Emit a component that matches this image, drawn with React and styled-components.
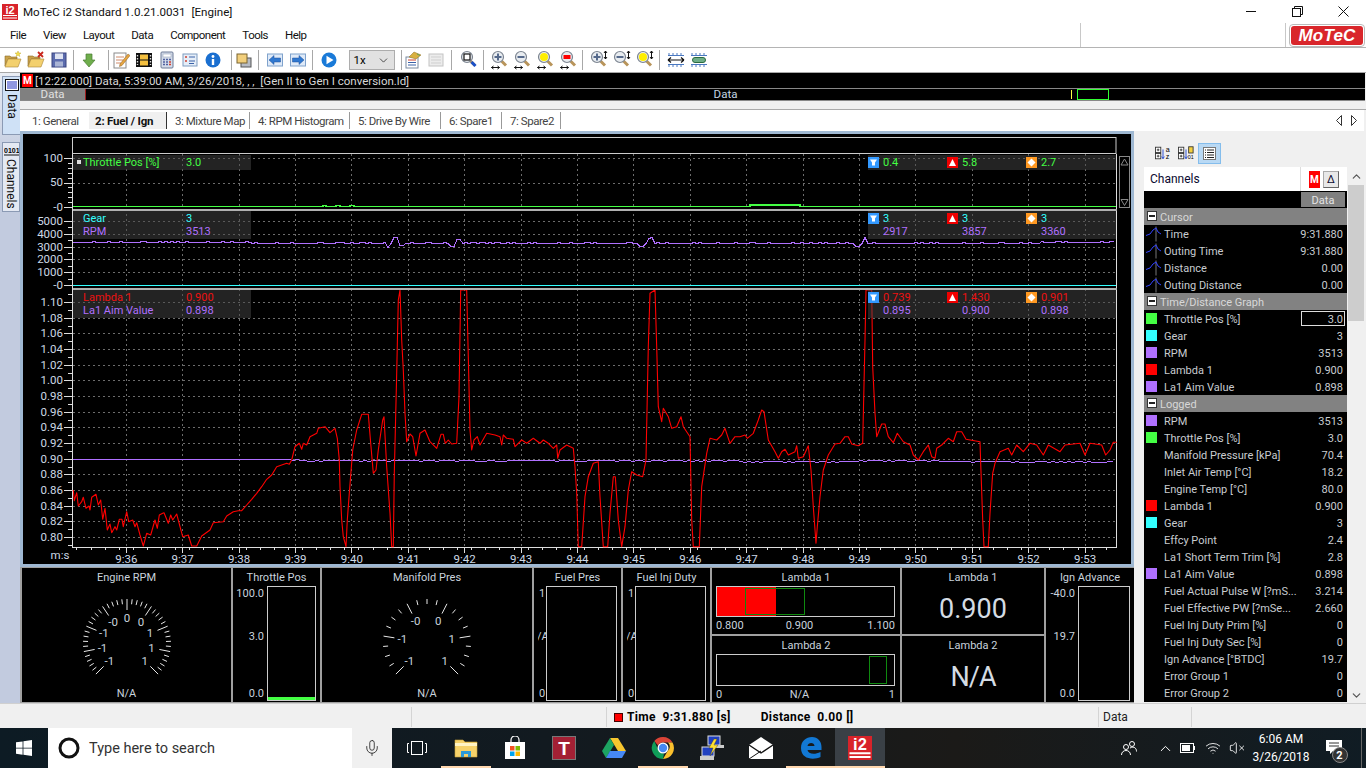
import React from 'react'
import styled, { createGlobalStyle } from 'styled-components'
import { Mic, ChevronUp, ChevronDown, VolumeX, Wifi } from 'lucide-react'

const GlobalStyle = createGlobalStyle`
  html, body { margin: 0; padding: 0; background: #f0f0f0; }
  * { box-sizing: border-box; }
  body { font-family: Roboto, "Liberation Sans", sans-serif; font-size: 12px; color: #000; overflow: hidden; }
`

/* ---------- data ---------- */

const MENUS = ['File', 'View', 'Layout', 'Data', 'Component', 'Tools', 'Help']
const TABS = [
  { label: '1: General', w: 65, noSep: true },
  { label: '2: Fuel / Ign', w: 78, active: true },
  { label: '3: Mixture Map', w: 83 },
  { label: '4: RPM Histogram', w: 100 },
  { label: '5: Drive By Wire', w: 91 },
  { label: '6: Spare1', w: 61 },
  { label: '7: Spare2', w: 59 },
]

const GREEN = '#44ff44'
const CYAN = '#33ffff'
const PURPLE = '#b070ff'
const RED = '#ff0000'

const CHANNELS = [
  { section: 'Cursor', rows: [
    { name: 'Time', value: '9:31.880', cursor: true },
    { name: 'Outing Time', value: '9:31.880', cursor: true },
    { name: 'Distance', value: '0.00', cursor: true },
    { name: 'Outing Distance', value: '0.00', cursor: true },
  ] },
  { section: 'Time/Distance Graph', rows: [
    { name: 'Throttle Pos [%]', value: '3.0', color: GREEN, boxed: true },
    { name: 'Gear', value: '3', color: CYAN },
    { name: 'RPM', value: '3513', color: PURPLE },
    { name: 'Lambda 1', value: '0.900', color: RED },
    { name: 'La1 Aim Value', value: '0.898', color: PURPLE },
  ] },
  { section: 'Logged', rows: [
    { name: 'RPM', value: '3513', color: PURPLE },
    { name: 'Throttle Pos [%]', value: '3.0', color: GREEN },
    { name: 'Manifold Pressure [kPa]', value: '70.4' },
    { name: 'Inlet Air Temp [°C]', value: '18.2' },
    { name: 'Engine Temp [°C]', value: '80.0' },
    { name: 'Lambda 1', value: '0.900', color: RED },
    { name: 'Gear', value: '3', color: CYAN },
    { name: 'Effcy Point', value: '2.4' },
    { name: 'La1 Short Term Trim [%]', value: '2.8' },
    { name: 'La1 Aim Value', value: '0.898', color: PURPLE },
    { name: 'Fuel Actual Pulse W [?mS...', value: '3.214' },
    { name: 'Fuel Effective PW [?mSe...', value: '2.660' },
    { name: 'Fuel Inj Duty Prim [%]', value: '0' },
    { name: 'Fuel Inj Duty Sec [%]', value: '0' },
    { name: 'Ign Advance [°BTDC]', value: '19.7' },
    { name: 'Error Group 1', value: '0' },
    { name: 'Error Group 2', value: '0' },
  ] },
]

const LEGENDS = [
  { top: 21, square: true, rows: [
    { color: GREEN, name: 'Throttle Pos [%]', value: '3.0', min: '0.4', max: '5.8', avg: '2.7' },
  ] },
  { top: 77, rows: [
    { color: CYAN, name: 'Gear', value: '3', min: '3', max: '3', avg: '3' },
    { color: PURPLE, name: 'RPM', value: '3513', min: '2917', max: '3857', avg: '3360' },
  ] },
  { top: 156, rows: [
    { color: '#ee1111', name: 'Lambda 1', value: '0.900', min: '0.739', max: '1.430', avg: '0.901' },
    { color: PURPLE, name: 'La1 Aim Value', value: '0.898', min: '0.895', max: '0.900', avg: '0.898' },
  ] },
]

// trace points read off the reference at 3x, x/y in crop pixels
const fromCrop = (pts, ox, oy) => pts.map(([x, y]) => `${(ox + x / 3).toFixed(1)},${(oy + y / 3).toFixed(1)}`).join(' ')

const LAMBDA_A = [[160,330],[163,362],[170,338],[175,378],[185,365],[190,352],[198,385],[207,378],[210,390],[215,352],[228,343],[235,375],[242,360],[248,418],[255,385],[262,450],[270,432],[275,458],[285,440],[290,450],[298,418],[306,418],[310,440],[320,395],[326,425],[338,420],[345,440],[350,428],[360,465],[370,498],[380,460],[392,465],[405,420],[412,445],[418,405],[428,400],[432,398],[445,430],[452,405],[458,420],[470,402],[480,440],[488,470],[505,465],[515,498],[530,498],[545,468],[570,450],[580,428],[610,425],[620,408],[640,395],[655,392],[665,392],[680,375],[695,358],[710,340],[725,320],[740,298],[755,285],[770,260],[800,250],[808,253],[815,240],[825,200],[838,190],[845,208],[850,190],[860,195],[870,170],[890,160],[895,145],[915,140],[930,158],[945,145],[952,175],[958,240]]
const LAMBDA_B = [[0,620],[5,720],[10,770],[18,800],[22,720],[28,640],[38,510],[50,450],[65,403],[85,403],[92,490],[100,580],[108,570],[115,510],[128,420],[132,410],[140,560],[150,700],[155,800],[160,800],[163,580],[170,280],[175,60],[180,30],[185,180],[190,270],[195,400],[200,485],[210,462],[218,470],[228,528],[240,460],[255,450],[270,485],[290,505],[303,463],[310,463],[316,490],[325,480],[335,492],[350,490],[357,350],[362,30],[380,30],[385,230],[390,450],[395,510],[402,480],[412,470],[420,495],[440,460],[465,465],[480,470],[485,495],[490,465],[500,475],[520,478],[525,500],[545,480],[560,490],[580,475],[600,490],[610,480],[625,490],[640,505],[650,495],[653,535],[660,510],[680,495],[700,505],[705,560],[710,640],[715,800],[725,800],[735,650],[745,590],[760,550],[775,545],[780,650],[790,800],[803,800],[810,700],[820,590],[826,590],[835,720],[845,800],[855,740],[865,630],[875,575],[890,585],[908,590],[918,540],[925,200],[930,40],[945,30],[950,200],[955,380],[965,425],[970,385],[985,410],[995,445],[1010,440],[1023,410],[1030,440],[1050,470],[1055,720],[1060,800],[1078,800],[1085,620],[1100,520],[1110,475],[1130,480],[1145,465],[1155,445],[1170,490],[1185,470],[1198,470]]
const LAMBDA_C = [[0,470],[15,465],[22,475],[40,460],[55,420],[65,390],[72,395],[85,480],[105,515],[115,535],[125,515],[135,508],[145,525],[165,515],[170,497],[175,535],[190,530],[205,497],[213,570],[220,680],[228,790],[232,740],[240,650],[250,570],[265,525],[285,492],[300,490],[315,470],[325,470],[335,492],[355,497],[368,490],[375,180],[378,30],[395,30],[398,260],[405,400],[410,470],[425,432],[435,432],[445,470],[460,488],[472,460],[490,485],[510,495],[520,525],[535,540],[550,515],[565,495],[575,530],[585,535],[590,505],[605,495],[625,475],[640,485],[650,455],[665,455],[678,478],[720,485],[722,550],[728,720],[732,800],[745,800],[750,700],[758,580],[765,550],[780,515],[805,505],[815,525],[830,495],[850,515],[870,490],[890,495],[910,525],[925,495],[960,515],[975,495],[1020,490],[1035,525],[1050,490],[1085,495],[1097,525],[1110,510],[1120,487],[1130,487]]
const LAMBDA = [fromCrop(LAMBDA_A, 20, 380), fromCrop(LAMBDA_B, 340, 280), fromCrop(LAMBDA_C, 740, 280)].join(' ')

const noise = x => {
  const n = Math.sin(x * 12.9898) * 43758.5453
  return n - Math.floor(n)
}

const RPM_BUMPS = [[388, 4], [395, -6], [401, 2], [452, 3], [459, -4], [642, 3], [650, -5], [858, 3], [865, -5]]
const buildRpm = () => {
  const pts = []
  for (let x = 73; x <= 1116; x += 3) {
    let y = 242.5 + (x < 250 ? -1 : 0) + (x > 1040 ? -1 : 0) + (noise(x) > 0.72 ? -1 : 0)
    RPM_BUMPS.forEach(([bx, d]) => { if (Math.abs(bx - x) <= 2) y += d })
    pts.push(`${x},${Math.round(y) + 0.5}`)
  }
  return pts.join(' ')
}

const buildAim = () => {
  const pts = []
  for (let x = 73; x <= 1116; x += 4) {
    const base = x < 300 ? 459 : x < 740 ? 460 : x < 860 ? 461 : x < 940 ? 460 : 461
    pts.push(`${x},${base + (x > 290 && noise(x + 9) > 0.75 ? 1 : 0) + 0.5}`)
  }
  return pts.join(' ')
}

const THROTTLE = '73,206.5 323,206.5 323,205.5 326,205.5 326,206.5 336,206.5 336,205.5 340,205.5 340,206.5 350,206.5 350,205.5 354,205.5 354,206.5 750,206.5 750,205 800,205 800,206.5 1116,206.5'
const SECONDS = ['9:36','9:37','9:38','9:39','9:40','9:41','9:42','9:43','9:44','9:45','9:46','9:47','9:48','9:49','9:50','9:51','9:52','9:53']
const secX = i => 126.3 + i * 56.4

/* ---------- window chrome ---------- */

const Screen = styled.div`
  width: 1366px;
  height: 768px;
  display: flex;
  flex-direction: column;
  background: #f0f0f0;
  overflow: hidden;
`

const TitleBar = styled.div`
  height: 23px;
  display: flex;
  align-items: center;
  background: #fff;
  padding-left: 2px;
`

const TitleText = styled.span`
  margin-left: 5px;
  font-size: 11.6px;
  white-space: pre;
  color: #111;
`

const WindowButtons = styled.div`
  margin-left: auto;
  display: flex;
`

const WindowButton = styled.div`
  width: 46px;
  height: 20px;
  display: flex;
  align-items: center;
  justify-content: center;
`

const MenuBar = styled.div`
  height: 25px;
  display: flex;
  align-items: center;
  background: #fff;
  border-bottom: 1px solid #b4b4b4;
  padding-left: 1.5px;
  position: relative;
`

const MenuItem = styled.span`
  padding: 0 8.5px;
  font-size: 11.5px;
  letter-spacing: -0.5px;
  color: #111;
`

const MenuSpacer = styled.div`
  margin-left: auto;
  width: 206px;
  height: 24px;
  border-left: 1px solid #c8c8c8;
  border-right: 1px solid #c8c8c8;
`

const LogoBox = styled.div`
  width: 76px;
  height: 23px;
  margin: 0 1px 0 3px;
  padding: 1px;
  border: 1px solid #bbb;
  border-radius: 4px;
  background: #fff;
`

const LogoInner = styled.div`
  height: 100%;
  border-radius: 3px;
  background: #d9262b;
  color: #fff;
  font: italic bold 17px/19px "Liberation Sans", sans-serif;
  text-align: center;
  letter-spacing: 0.2px;
`

const ToolBar = styled.div`
  height: 25px;
  display: flex;
  align-items: center;
  padding-left: 1.5px;
  background: #fff;
  border-bottom: 1px solid #a8a8a8;
`

const ToolButton = styled.div`
  width: 23px;
  height: 22px;
  flex: none;
  display: flex;
  align-items: center;
  justify-content: center;
`

const ToolSep = styled.div`
  width: 1px;
  height: 20px;
  flex: none;
  background: #a8a8a8;
  margin: 0 ${p => p.$r}px 0 ${p => p.$l}px;
`

const Combo = styled.div`
  width: 46px;
  height: 20px;
  margin-left: 8px;
  flex: none;
  display: flex;
  align-items: center;
  justify-content: space-between;
  padding: 0 4px;
  background: #e1e1e1;
  border: 1px solid #adadad;
  font-size: 11.5px;
`

/* ---------- rail ---------- */

const Workspace = styled.div`
  flex: 1;
  min-height: 0;
  display: flex;
`

const Rail = styled.div`
  width: 20px;
  flex: none;
  display: flex;
  flex-direction: column;
  align-items: flex-end;
  gap: 7px;
  padding-top: 3px;
  background: linear-gradient(#e9edf4, #c2cbdf 14%, #c2cbdf);
`

const RailTab = styled.div`
  width: 18px;
  height: ${p => p.$h}px;
  display: flex;
  flex-direction: column;
  align-items: center;
  padding-top: 2px;
  background: ${p => (p.$active ? '#cfe1f6' : '#e4e9f3')};
  border: 1px solid #8b9ab4;
  border-right: ${p => (p.$active ? 0 : '1px solid #8b9ab4')};
`

const RailLabel = styled.span`
  writing-mode: vertical-rl;
  margin-top: 3px;
  font-size: 12px;
  line-height: 14px;
  color: #111;
`

/* ---------- session strip + tabs ---------- */

const Main = styled.div`
  flex: 1;
  min-width: 0;
  display: flex;
  flex-direction: column;
`

const Strip = styled.div`
  width: 1345px;
  background: #000;
  border-bottom: 1px solid #888;
`

const SessionLine = styled.div`
  height: 16px;
  display: flex;
  align-items: center;
  gap: 2px;
  padding-left: 2px;
  border-bottom: 1px solid #888;
  color: #d8d8d8;
  font-size: 11.5px;
  white-space: pre;
`

const MBadge = styled.span`
  width: ${p => p.$w || 11}px;
  height: ${p => p.$h || 13}px;
  display: inline-flex;
  align-items: center;
  justify-content: center;
  background: #f00;
  color: #fff;
  font-size: 10px;
  font-weight: 700;
  flex: none;
`

const TimeLine = styled.div`
  height: 11px;
  position: relative;
  display: flex;
  color: #c4d4e4;
  font-size: 11.5px;
  line-height: 11px;
  text-align: center;
`

const TimeChip = styled.div`
  width: 66px;
  background: #808080;
  border-right: 1px solid #a02020;
  color: #e0e0e0;
`

const TimeFill = styled.div`
  flex: 1;
`

const CursorMark = styled.div`
  position: absolute;
  top: 1px;
  left: 1051px;
  width: 1px;
  height: 9px;
  background: #ffff44;
`

const CursorRange = styled.div`
  position: absolute;
  top: 0;
  left: 1057px;
  width: 32px;
  height: 11px;
  border: 1px solid #33ff33;
`

const Band = styled.div`
  height: 9px;
  background: #f0f0f0;
  border-bottom: 1px solid #aaa;
`

const TabRow = styled.div`
  width: 1344px;
  height: 21px;
  display: flex;
  align-items: stretch;
  padding-left: 4px;
  background: #fff;
`

const Tab = styled.div`
  width: ${p => p.$w}px;
  flex: none;
  display: flex;
  align-items: center;
  padding-left: ${p => (p.$active ? 6 : 8)}px;
  font-size: 11.5px;
  letter-spacing: ${p => (p.$active ? -0.2 : -0.45)}px;
  font-weight: ${p => (p.$active ? 700 : 400)};
  color: ${p => (p.$active ? '#111' : '#444')};
  background: ${p => (p.$active ? '#f0f0f0' : 'transparent')};
  margin: 2px 0;
  border-right: 1px solid ${p => (p.$noSep ? 'transparent' : p.$active ? '#333' : '#999')};
`

const TabArrows = styled.div`
  margin-left: auto;
  display: flex;
  align-items: center;
  gap: 9px;
  padding-right: 7px;
`

/* ---------- chart ---------- */

const Body = styled.div`
  flex: 1;
  min-height: 0;
  display: flex;
`

const Center = styled.div`
  width: 1114px;
  flex: none;
  display: flex;
  flex-direction: column;
`

const ChartFrame = styled.div`
  position: relative;
  height: 436px;
  border: 3px solid #9fb8d2;
  background: #000;
`

const ChartSvg = styled.svg`
  display: block;
  font-family: Roboto, "Liberation Sans", sans-serif;
  font-size: 11.5px;
`

const LegendBox = styled.div`
  position: absolute;
  top: ${p => p.$top}px;
  left: ${p => p.$left}px;
  width: ${p => p.$width}px;
  padding: 1px 0 1px ${p => p.$pad || 0}px;
  background: rgba(70, 70, 70, 0.5);
  font-size: 11px;
  line-height: 13px;
`

const LegendRow = styled.div`
  display: grid;
  grid-template-columns: ${p => p.$cols};
  color: ${p => p.$color};
  white-space: nowrap;
`

const StatCell = styled.div`
  display: flex;
  align-items: center;
  gap: 4px;
  padding-left: ${p => (p.$plain ? 15 : 0)}px;
`

const LegendSquare = styled.span`
  position: absolute;
  left: 4px;
  top: 5px;
  width: 4px;
  height: 4px;
  background: #ddd;
`

/* ---------- gauges ---------- */

const GaugeGrid = styled.div`
  height: 136px;
  display: grid;
  grid-template-columns: 209px 87px 210px 87px 87px 188px 142px 88px;
  grid-template-rows: 1fr 1fr;
  gap: 2px;
  padding: 1px 0 1px 2px;
  background: #a0a0a0;
  color: #c9d3dd;
  font-size: 11px;
`

const GaugePanel = styled.div`
  background: #000;
  min-width: 0;
  display: flex;
  flex-direction: column;
  grid-row: ${p => (p.$tall ? 'span 2' : 'auto')};
`

const GaugeTitle = styled.div`
  height: 18px;
  flex: none;
  text-align: center;
  line-height: 20px;
`

const DialSvg = styled.svg`
  display: block;
  margin: 7px auto 0;
  font-family: Roboto, "Liberation Sans", sans-serif;
  font-size: 11.5px;
`

const DialValue = styled.div`
  margin-top: 4px;
  text-align: center;
  line-height: 14px;
`

const VBarBody = styled.div`
  flex: 1;
  display: flex;
  padding: 0 4px 5px 0;
`

const VScale = styled.div`
  width: ${p => p.$w}px;
  margin-left: ${p => p.$ml}px;
  flex: none;
  display: grid;
  grid-template-rows: 43px 57px auto;
  grid-template-columns: minmax(0, 1fr);
  overflow: hidden;
  line-height: 14px;
  padding: 1px ${p => p.$pr}px 0 0;
`

const VScaleText = styled.div`
  display: flex;
  min-width: 0;
  justify-content: ${p => p.$align};
  white-space: nowrap;
  transform: translateX(${p => p.$shift}px);
`

const VBarBox = styled.div`
  flex: 1;
  display: flex;
  flex-direction: column;
  justify-content: flex-end;
  border: 1px solid #ccc;
`

const VBarFill = styled.div`
  background: ${GREEN};
`

const HBarWrap = styled.div`
  padding: 0 5px 0 4px;
`

const HBarBox = styled.div`
  position: relative;
  height: ${p => p.$h}px;
  border: 1px solid #ccc;
`

const HBarFill = styled.div`
  height: 100%;
  background: #f00;
`

const HBarTarget = styled.div`
  position: absolute;
  top: 1px;
  bottom: 1px;
  border: 1px solid #0f8a0f;
`

const HScale = styled.div`
  display: grid;
  grid-template-columns: 1fr 1fr 1fr;
  margin-top: 2px;
  line-height: 14px;
  span:nth-child(2) { text-align: center; transform: translateX(-6px); }
  span:nth-child(3) { text-align: right; }
`

const BigValue = styled.div`
  flex: 1;
  display: flex;
  align-items: center;
  justify-content: center;
  padding-bottom: 2px;
  font-size: 27px;
  letter-spacing: ${p => (p.$tight ? -1 : 0)}px;
  color: #d4dce4;
`

/* ---------- channel panel ---------- */

const Side = styled.div`
  flex: 1;
  min-width: 0;
  display: flex;
  flex-direction: column;
  padding: 11px 2px 1px 10px;
`

const SideTools = styled.div`
  height: 22px;
  margin-bottom: 3px;
  display: flex;
  align-items: center;
  gap: 5px;
  padding-left: 10px;
`

const SideToolBtn = styled.div`
  width: ${p => (p.$active ? 23 : 18)}px;
  height: 21px;
  margin-left: ${p => (p.$active ? -2 : 0)}px;
  display: flex;
  align-items: center;
  justify-content: center;
  background: ${p => (p.$active ? '#b9d9f4' : 'transparent')};
  border: 1px solid ${p => (p.$active ? '#84bdec' : 'transparent')};
`

const SideMain = styled.div`
  flex: 1;
  min-height: 0;
  display: flex;
  gap: 1px;
`

const ChannelColumn = styled.div`
  width: 203px;
  flex: none;
  display: flex;
  flex-direction: column;
`

const ChannelHead = styled.div`
  height: 24px;
  flex: none;
  display: flex;
  align-items: center;
  padding-left: 6px;
  background: #fff;
  color: #0a0a30;
  font-size: 12px;
`

const HeadBtns = styled.div`
  margin-left: auto;
  height: 100%;
  width: 47px;
  display: flex;
  align-items: center;
  gap: 3px;
  padding-left: 8px;
  border-left: 1px solid #ddd;
`

const DeltaBtn = styled.span`
  width: 16px;
  height: 17px;
  display: flex;
  align-items: center;
  justify-content: center;
  background: #e8e8e8;
  border: 1px solid #aaa;
  border-right-color: #666;
  border-bottom-color: #666;
  font-size: 11px;
`

const ChannelTable = styled.div`
  flex: 1;
  background: #000;
  color: #c8ccd0;
  font-size: 11px;
`

const ColHead = styled.div`
  height: 17px;
  display: flex;
  justify-content: flex-end;
  padding: 1px 2px 1px 0;
`

const ColName = styled.div`
  width: 44px;
  text-align: center;
  line-height: 17px;
  background: #808080;
  color: #e4e4e4;
`

const SectionHead = styled.div`
  height: 17px;
  display: flex;
  align-items: center;
  gap: 3px;
  padding: 1px 0 0 3px;
  background: #828282;
  color: #d8d8d8;
`

const MinusBox = styled.span`
  width: 10px;
  height: 10px;
  margin: -1px 0 1px;
  background: #fff;
  border: 1px solid #333;
  display: flex;
  align-items: center;
  justify-content: center;
  &::after { content: ''; width: 6px; height: 2px; background: #222; }
`

const ChannelRow = styled.div`
  height: 17px;
  display: flex;
  align-items: center;
  padding: 1px 4px 0 2px;
  white-space: nowrap;
  position: relative;
`

const Swatch = styled.span`
  width: 11px;
  height: 11px;
  margin: -1px 7px 0 0;
  flex: none;
  background: ${p => p.$color || 'transparent'};
`

const ChannelValue = styled.span`
  margin-left: auto;
`

const ValueBox = styled.span`
  position: absolute;
  right: 2px;
  top: 1px;
  width: 44px;
  height: 15px;
  border: 1px solid #ddd;
`

const ScrollTrack = styled.div`
  flex: 1;
  display: flex;
  flex-direction: column;
  align-items: center;
  padding-top: 3px;
`

const ScrollThumb = styled.div`
  width: 100%;
  height: 136px;
  background: #cdcdcd;
  margin: 2px 0 auto;
`

/* ---------- status + taskbar ---------- */

const StatusBar = styled.div`
  height: 25px;
  flex: none;
  display: flex;
  align-items: stretch;
  padding: 3px 0 1px;
  background: #f0f0f0;
  border-top: 1px solid #d0d0d0;
  font-size: 12px;
`

const StatusCell = styled.div`
  width: ${p => p.$w}px;
  flex: ${p => (p.$w ? 'none' : 1)};
  display: flex;
  align-items: center;
  padding-left: ${p => p.$pad || 0}px;
  border-right: ${p => (p.$last ? 0 : '1px solid #d4d4d4')};
  white-space: pre;
  color: #222;
`

const StatusRed = styled.span`
  width: 9px;
  height: 9px;
  margin-right: 4px;
  background: #f00;
  border: 1px solid #400;
`

const StatusBold = styled.b`
  color: #000;
  letter-spacing: 0.35px;
  margin-left: ${p => p.$ml || 0}px;
`

const Taskbar = styled.div`
  height: 40px;
  flex: none;
  display: flex;
  align-items: stretch;
  background: linear-gradient(90deg, #0d1b24, #121a20 40%, #1b1a18 70%, #101c24);
  color: #fff;
`

const StartButton = styled.div`
  width: 48px;
  display: flex;
  align-items: center;
  justify-content: center;
`

const SearchBox = styled.div`
  width: 304px;
  display: flex;
  align-items: center;
  padding-left: 10px;
  background: #fff;
  color: #333;
  font-size: 14.5px;
`

const SearchText = styled.span`
  margin-left: 9px;
`

const MicCell = styled.div`
  width: 40px;
  display: flex;
  align-items: center;
  justify-content: center;
  background: #f0f0f0;
  color: #222;
`

const TaskItem = styled.div`
  width: 49.25px;
  display: flex;
  align-items: center;
  justify-content: center;
  background: ${p => (p.$active ? '#3a4046' : 'transparent')};
  border-bottom: 2px solid ${p => (p.$run ? '#ffd7ae' : 'transparent')};
  border-top: 2px solid transparent;
`

const Tray = styled.div`
  margin-left: auto;
  display: flex;
  align-items: center;
`

const TrayItem = styled.div`
  width: ${p => p.$w}px;
  margin-left: ${p => p.$ml || 0}px;
  display: flex;
  justify-content: center;
`

const Clock = styled.div`
  width: 66px;
  margin-right: 1.5px;
  text-align: center;
  font-size: 12px;
  line-height: 18px;
`

const NotifyWrap = styled.div`
  position: relative;
  width: 36px;
  height: 26px;
  display: flex;
  align-items: center;
  justify-content: center;
`

const NotifyBadge = styled.span`
  position: absolute;
  left: 16px;
  top: 12px;
  width: 16px;
  height: 16px;
  border-radius: 50%;
  background: #333;
  border: 1px solid #888;
  display: flex;
  align-items: center;
  justify-content: center;
  font-size: 11px;
  font-weight: 700;
`

const ShowDesktop = styled.div`
  width: 1px;
  height: 100%;
  margin: 0 4px 0 9.5px;
  background: #666;
`

/* ---------- icons ---------- */

const Ico = ({ w = 18, h = 18, children }) => (
  <svg width={w} height={h} viewBox={`0 0 ${w} ${h}`}>{children}</svg>
)

const FolderBase = () => (
  <>
    <path d="M1 5h5l1 1h6v2H4l-3 7z" fill="#c9a24a" stroke="#8a6d2a" strokeWidth=".6" />
    <path d="M4 8h13l-3 8H1z" fill="#f3d06e" stroke="#a98536" strokeWidth=".6" />
  </>
)

const I = {
  open: () => <Ico><FolderBase /><path d="M14 0l.8 2h2.2l-1.8 1.4.7 2.1-1.9-1.2-1.9 1.2.7-2.1L11 2h2.200z" fill="#f7e24c" stroke="#b8a020" strokeWidth=".4" /></Ico>,
  del: () => <Ico><FolderBase /><path d="M11 1l5 5M16 1l-5 5" stroke="#c8281e" strokeWidth="1.8" /></Ico>,
  save: () => (
    <Ico>
      <rect x="2" y="2" width="14" height="14" fill="#5c6cae" stroke="#3a4580" />
      <rect x="5" y="2.500" width="8" height="5.500" fill="#dfe4f2" />
      <rect x="5" y="10.500" width="8" height="5" fill="#aab4d4" />
    </Ico>
  ),
  down: () => <Ico><path d="M6 3h6v6h3l-6 7-6-7h3z" fill="#6fae4c" stroke="#4a7c34" strokeWidth=".7" /></Ico>,
  edit: () => (
    <Ico>
      <rect x="2" y="2" width="12" height="15" fill="#fff" stroke="#8a8a8a" />
      <path d="M4 6h8M4 9h7M4 12h5" stroke="#d08a6a" />
      <path d="M8 13l8-10 2 1.500-8 10-2.500 1z" fill="#e6a640" stroke="#8a5a20" strokeWidth=".5" />
    </Ico>
  ),
  film: () => (
    <Ico>
      <rect x="1" y="2" width="16" height="14" fill="#111" />
      <rect x="5" y="3.500" width="8" height="5" fill="#f4c040" />
      <rect x="5" y="9.500" width="8" height="5" fill="#f4c040" />
      <path d="M2.500 4v10M15.500 4v10" stroke="#ddd" strokeWidth="1.400" strokeDasharray="1.500 1.500" />
    </Ico>
  ),
  calc: () => (
    <Ico>
      <rect x="3" y="1" width="12" height="16" rx="1" fill="#d4dcea" stroke="#6c7a96" />
      <rect x="5" y="3" width="8" height="3" fill="#fff" stroke="#8a98b0" strokeWidth=".5" />
      <path d="M5 8.500h2M8 8.500h2M11 8.500h2M5 11h2M8 11h2M5 13.500h2M8 13.500h2" stroke="#5060a0" strokeWidth="1.400" />
      <path d="M11 11h2M11 13.500h2" stroke="#d04030" strokeWidth="1.400" />
    </Ico>
  ),
  check: () => (
    <Ico>
      <rect x="2" y="3" width="14" height="12" fill="#e6eef8" stroke="#7f9cc0" />
      <path d="M4 6h2M4 10h2" stroke="#d04030" strokeWidth="1.500" />
      <path d="M8 6h6M8 10h6M8 12.500h5" stroke="#3a62a8" />
    </Ico>
  ),
  info: () => (
    <Ico w={16} h={16}>
      <circle cx="8" cy="8" r="7.500" fill="#1a6fd0" />
      <circle cx="8" cy="4.500" r="1.400" fill="#fff" />
      <rect x="6.800" y="7" width="2.400" height="6" fill="#fff" />
    </Ico>
  ),
  layers: () => (
    <Ico>
      <rect x="6" y="7" width="10" height="9" fill="#b8bcc4" stroke="#555" />
      <rect x="2" y="3" width="10" height="9" fill="#f2cf7c" stroke="#7a6430" />
    </Ico>
  ),
  left: () => (
    <Ico>
      <rect x="1.500" y="3" width="15" height="12" fill="#dfeaf8" stroke="#7fa2cc" />
      <path d="M3 9l5-4.500V7h6.500v4H8v2.500z" fill="#2f78d0" stroke="#1c4f98" strokeWidth=".5" />
    </Ico>
  ),
  right: () => (
    <Ico>
      <rect x="1.500" y="3" width="15" height="12" fill="#dfeaf8" stroke="#7fa2cc" />
      <path d="M15 9l-5-4.500V7H3.500v4H10v2.500z" fill="#2f78d0" stroke="#1c4f98" strokeWidth=".5" />
    </Ico>
  ),
  play: () => (
    <Ico w={16} h={16}>
      <circle cx="8" cy="8" r="7.500" fill="#1a7ad8" />
      <path d="M5.500 3.800l7 4.200-7 4.200z" fill="#fff" />
    </Ico>
  ),
  props: () => (
    <Ico>
      <rect x="2" y="6" width="12" height="11" fill="#fff" stroke="#7a8aa0" />
      <path d="M4 9h8" stroke="#d04030" /><path d="M4 11.500h8M4 14h8" stroke="#3a62a8" />
      <path d="M5 6l5-5 7 3-5 4z" fill="#d8b040" stroke="#8a6c20" strokeWidth=".5" />
      <path d="M13 3l3 1.500" stroke="#5aa05a" />
    </Ico>
  ),
  disabled: () => (
    <Ico>
      <rect x="2" y="3" width="14" height="12" fill="#ececec" stroke="#c4c4c4" />
      <path d="M4 6h10M4 9h10M4 12h10" stroke="#cfcfcf" />
    </Ico>
  ),
}

const Lens = ({ inner, arrows }) => (
  <svg width="21" height="20" viewBox="-2.5 0 21 20">
    <path d="M11 11l4.500 4.500" stroke="#b8945a" strokeWidth="3" />
    <circle cx="7.500" cy="7" r="5.500" fill="#e8ecf0" stroke="#7c8490" strokeWidth="1.200" />
    {inner === 'plus' && <path d="M4 7h7M7.500 3.500v7" stroke="#566a8c" strokeWidth="2" />}
    {inner === 'minus' && <path d="M4 7h7" stroke="#566a8c" strokeWidth="2" />}
    {inner === 'yellow' && <circle cx="7.500" cy="7" r="4" fill="#ffee00" />}
    {inner === 'red' && <rect x="4" y="5" width="7" height="4" fill="#f00" />}
    {inner === 'box' && <rect x="4.500" y="4" width="6" height="6" fill="#fff" stroke="#111" strokeWidth="1.200" />}
    {inner === 'box' && <path d="M12 12l4 4" stroke="#1a50c8" strokeWidth="3" />}
    {arrows === 'h' && <path d="M1 17.500h8M1 17.500l2-1.500M1 17.500l2 1.500M9 17.500l-2-1.500M9 17.500l-2 1.500" stroke="#111" fill="none" />}
    {arrows === 'v' && <path d="M16 1v8M16 1l-1.500 2M16 1l1.500 2M16 9l-1.500-2M16 9l1.500-2" stroke="#111" fill="none" />}
  </svg>
)

const Ruler = ({ link }) => (
  <svg width="18" height="16" viewBox="0 0 18 16">
    <path d="M1 3.500h16M1 12.500h16" stroke="#4a78c0" />
    <path d="M2 1v2M6 1v2M10 1v2M14 1v2M2 13v2M6 13v2M10 13v2M14 13v2" stroke="#4a78c0" />
    {link
      ? <rect x="2.500" y="5.500" width="13" height="5" rx="2.500" fill="#6fae88" stroke="#2a6a40" />
      : <path d="M1 8h16M1 8l3-2.500M1 8l3 2.500M17 8l-3-2.500M17 8l-3 2.500" stroke="#111" fill="none" strokeWidth="1.200" />}
  </svg>
)

const I2Logo = ({ size = 16 }) => (
  <svg width={size} height={size} viewBox="0 0 16 16">
    <rect width="16" height="16" fill="#d8232a" />
    <text x="8" y="9.500" textAnchor="middle" fontSize="11" fontWeight="700" fontFamily="Liberation Sans, sans-serif" fill="#fff">i2</text>
    <path d="M1 11.500h14M1 14h14" stroke="#fff" strokeWidth="1.200" />
  </svg>
)

const Marker = ({ kind }) => {
  const bg = { min: '#3399ff', max: '#f00000', avg: '#ff9922' }[kind]
  return (
    <svg width="11" height="11" viewBox="0 0 11 11" style={{ flex: 'none' }}>
      <rect width="11" height="11" fill={bg} />
      {kind === 'min' && <path d="M2 2.500h7l-2 3v3H4v-3z" fill="#fff" />}
      {kind === 'max' && <path d="M5.500 2l3.500 7H2z" fill="#fff" />}
      {kind === 'avg' && <path d="M5.500 1.500l4 4-4 4-4-4z" fill="#fff" />}
    </svg>
  )
}

const SortIcon = ({ digits }) => (
  <svg width="18" height="16" viewBox="0 0 18 16" fontFamily="Liberation Sans, sans-serif">
    <rect x=".5" y="1.500" width="6" height="6" fill="#fff" stroke="#333" />
    <path d="M2 4.500h3M3.500 3v3" stroke="#333" />
    <rect x=".5" y="8.500" width="6" height="6" fill="#fff" stroke="#333" />
    <path d="M2 11.500h3M3.500 10v3" stroke="#333" />
    <path d="M9 4v10M7.500 12l1.500 2.500 1.500-2.500" stroke="#1a40d0" fill="none" />
    {digits
      ? <><rect x="12" y="1" width="5" height="7" fill="#f4d040" stroke="#333" /><text x="11" y="15" fontSize="6">01</text></>
      : <><text x="12" y="7" fontSize="8">a</text><text x="12" y="15" fontSize="8">z</text></>}
  </svg>
)

const CursorGlyph = () => (
  <svg width="15" height="16" viewBox="0 0 15 16" style={{ margin: '-1px 3px 0 0', flex: 'none' }}>
    <path d="M10 .5v15" stroke="#777" />
    <path d="M0 9.500l4-1.500 3-4 3-2 2 4 3 2" stroke="#3344ff" fill="none" />
  </svg>
)

/* ---------- pieces ---------- */

const Chart = () => {
  const g1 = [158, 182.5]
  const g2 = [221, 234, 246.5, 259, 272]
  const lambdaLabels = ['1.10','1.08','1.06','1.04','1.02','1.00','0.98','0.96','0.94','0.92','0.90','0.88','0.86','0.84','0.82','0.80']
  const g3 = lambdaLabels.map((_, i) => 302 + i * 15.67)
  const gridY = [...g1, ...g2, ...g3].map(y => Math.round(y) + 0.5)
  const minorY = []
  for (let y = 158; y <= 207; y += 4.9) minorY.push(y)
  for (let y = 221; y <= 285; y += 6.4) minorY.push(y)
  for (let y = 294.2; y <= 546; y += 7.835) minorY.push(y)
  const minorX = []
  for (let x = 76.9; x < 1116; x += 14.1) minorX.push(x)
  return (
    <ChartSvg width="1108" height="430" viewBox="23 134 1108 430">
      <rect x="72.500" y="137.500" width="1043.500" height="16" fill="none" stroke="#ccc" />
      <g shapeRendering="crispEdges" stroke="#6c6c6c" strokeDasharray="2 3">
        {gridY.map(y => <line key={y} x1="73" x2="1116" y1={y} y2={y} />)}
        {SECONDS.map((_, i) => <line key={i} x1={secX(i)} x2={secX(i)} y1="154" y2="547" />)}
      </g>
      <g shapeRendering="crispEdges" stroke="#ddd">
        <line x1="72.500" x2="72.500" y1="154" y2="548" />
        <line x1="1116.500" x2="1116.500" y1="154" y2="548" />
        <line x1="72" x2="1117" y1="547.500" y2="547.500" />
        {[158, 182.5, 207, 221, 234, 246.5, 259, 272, 285, ...g3].map(y => <line key={y} x1="64" x2="72" y1={Math.round(y) + 0.5} y2={Math.round(y) + 0.5} />)}
        {minorY.map(y => <line key={y} x1="68" x2="72" y1={Math.round(y) + 0.5} y2={Math.round(y) + 0.5} />)}
        {minorX.map(x => <line key={x} y1="548" y2="550" x1={x} x2={x} />)}
        {SECONDS.map((_, i) => <line key={i} y1="548" y2="553" x1={secX(i)} x2={secX(i)} />)}
      </g>
      <g fill="#cdd8e4" textAnchor="end">
        <text x="63" y="162">100</text><text x="63" y="186">50</text><text x="63" y="211">-0</text>
        {['5000','4000','3000','2000','1000','-0'].map((t, i) => <text key={i} x="63" y={225 + i * 12.8}>{t}</text>)}
        {lambdaLabels.map((t, i) => <text key={t} x="63" y={g3[i] + 4}>{t}</text>)}
      </g>
      <g fill="#cdd8e4" textAnchor="middle">
        <text x="60" y="559">m:s</text>
        {SECONDS.map((t, i) => <text key={t} x={secX(i)} y="562.500">{t}</text>)}
      </g>
      <polyline points={THROTTLE} fill="none" stroke={GREEN} strokeWidth="1.200" shapeRendering="crispEdges" />
      <polyline points={buildRpm()} fill="none" stroke={PURPLE} strokeWidth="1" shapeRendering="crispEdges" />
      <line x1="73" x2="1116" y1="285.500" y2="285.500" stroke={CYAN} shapeRendering="crispEdges" />
      <polyline points={buildAim()} fill="none" stroke={PURPLE} strokeWidth="1" shapeRendering="crispEdges" />
      <polyline points={LAMBDA} fill="none" stroke={RED} strokeWidth="1.100" strokeLinejoin="round" />
      <g shapeRendering="crispEdges" fill="#b0b0b0">
        <rect x="73" y="209" width="1044" height="2" />
        <rect x="73" y="288" width="1044" height="2" />
      </g>
      <g fill="none" stroke="#888">
        <rect x="1119.500" y="156.500" width="10" height="51" />
        <path d="M1124.500 159l-3.500 6h7zM1124.500 205.500l-3.500-6h7z" />
      </g>
    </ChartSvg>
  )
}

const Legends = () => LEGENDS.map(l => (
  <React.Fragment key={l.top}>
    <LegendBox $top={l.top} $left={50} $width={178} $pad={10}>
      {l.square && <LegendSquare />}
      {l.rows.map(r => (
        <LegendRow key={r.name} $color={r.color} $cols="103px 1fr">
          <span>{r.name}</span><span>{r.value}</span>
        </LegendRow>
      ))}
    </LegendBox>
    <LegendBox $top={l.top} $left={845} $width={248}>
      {l.rows.map((r, i) => (
        <LegendRow key={r.name} $color={r.color} $cols="79px 79px 1fr">
          {['min', 'max', 'avg'].map(k => (
            <StatCell key={k} $plain={i > 0}>
              {i === 0 && <Marker kind={k} />}
              <span>{r[k]}</span>
            </StatCell>
          ))}
        </LegendRow>
      ))}
    </LegendBox>
  </React.Fragment>
))

const Dial = ({ labels, sub }) => {
  const cx = 60
  const cy = 50
  const steps = (labels.length - 1) * sub
  const pt = (a, r) => [cx + r * Math.sin((a * Math.PI) / 180), cy - r * Math.cos((a * Math.PI) / 180)]
  const ticks = []
  for (let i = 0; i <= steps; i++) {
    const a = -135 + (270 * i) / steps
    const [x1, y1] = pt(a, i % sub === 0 ? 33 : 39)
    const [x2, y2] = pt(a, 44)
    ticks.push(<line key={i} x1={x1} y1={y1} x2={x2} y2={y2} stroke="#e8e8e8" />)
  }
  return (
    <DialSvg width="120" height="90" viewBox="0 0 120 90">
      {ticks}
      {labels.map((t, i) => {
        const [x, y] = pt(-135 + (270 * i) / (labels.length - 1), 25)
        return <text key={i} x={x} y={y + 4} textAnchor="middle" fill="#c9d3dd">{t}</text>
      })}
    </DialSvg>
  )
}

const DialPanel = ({ title, labels, sub }) => (
  <GaugePanel $tall>
    <GaugeTitle>{title}</GaugeTitle>
    <Dial labels={labels} sub={sub} />
    <DialValue>N/A</DialValue>
  </GaugePanel>
)

const VBarPanel = ({ title, labels, fill = 0, scaleW, ml = 0, pr = 3, align = 'flex-end' }) => (
  <GaugePanel $tall>
    <GaugeTitle>{title}</GaugeTitle>
    <VBarBody>
      <VScale $w={scaleW} $ml={ml} $pr={pr}>
        {labels.map((t, i) => <VScaleText key={i} $align={align} $shift={t === 'N/A' ? -3 : 0}>{t}</VScaleText>)}
      </VScale>
      <VBarBox>{fill > 0 && <VBarFill style={{ height: fill }} />}</VBarBox>
    </VBarBody>
  </GaugePanel>
)

const HBarPanel = ({ title, height, value, target, labels }) => (
  <GaugePanel>
    <GaugeTitle>{title}</GaugeTitle>
    <HBarWrap>
      <HBarBox $h={height}>
        {value > 0 && <HBarFill style={{ width: `${value * 100}%` }} />}
        <HBarTarget style={{ left: target[0], width: target[1] }} />
      </HBarBox>
      <HScale>{labels.map(t => <span key={t}>{t}</span>)}</HScale>
    </HBarWrap>
  </GaugePanel>
)

const DigitalPanel = ({ title, value }) => (
  <GaugePanel>
    <GaugeTitle>{title}</GaugeTitle>
    <BigValue $tight={value === 'N/A'}>{value}</BigValue>
  </GaugePanel>
)

const Channels = () => (
  <ChannelColumn>
    <ChannelHead>
      Channels
      <HeadBtns>
        <MBadge $w={11} $h={17}>M</MBadge>
        <DeltaBtn>Δ</DeltaBtn>
      </HeadBtns>
    </ChannelHead>
    <ChannelTable>
      <ColHead><ColName>Data</ColName></ColHead>
      {CHANNELS.map(s => (
        <React.Fragment key={s.section}>
          <SectionHead><MinusBox />{s.section}</SectionHead>
          {s.rows.map(r => (
            <ChannelRow key={r.name}>
              {r.cursor ? <CursorGlyph /> : <Swatch $color={r.color} />}
              {r.name}
              <ChannelValue>{r.value}</ChannelValue>
              {r.boxed && <ValueBox />}
            </ChannelRow>
          ))}
        </React.Fragment>
      ))}
    </ChannelTable>
  </ChannelColumn>
)

const TaskIcons = () => (
  <>
    <TaskItem>
      <svg width="20" height="16" viewBox="0 0 20 16" fill="none" stroke="#fff">
        <rect x="4.500" y="1.500" width="11" height="13" />
        <path d="M2 3.500H.5v9H2M18 3.500h1.500v9H18" />
      </svg>
    </TaskItem>
    <TaskItem $run>
      <svg width="24" height="20" viewBox="0 0 24 20">
        <path d="M1 2h8l2 2h12v15H1z" fill="#f6d26a" stroke="#c9a23a" strokeWidth=".6" />
        <path d="M1 5h22v3H1z" fill="#fff3c4" />
        <path d="M7 19v-6h10v6h-3v-3h-4v3z" fill="#2b9ad8" />
      </svg>
    </TaskItem>
    <TaskItem>
      <svg width="24" height="24" viewBox="0 0 24 24">
        <path d="M8 6V4a4 4 0 0 1 8 0v2" fill="none" stroke="#fff" strokeWidth="1.200" />
        <rect x="2" y="6" width="20" height="17" fill="#fff" />
        <rect x="7" y="10" width="4.500" height="4.500" fill="#f25022" />
        <rect x="12.500" y="10" width="4.500" height="4.500" fill="#7fba00" />
        <rect x="7" y="15.500" width="4.500" height="4.500" fill="#00a4ef" />
        <rect x="12.500" y="15.500" width="4.500" height="4.500" fill="#ffb900" />
      </svg>
    </TaskItem>
    <TaskItem>
      <svg width="24" height="24" viewBox="0 0 24 24">
        <rect x=".5" y=".5" width="23" height="23" fill="#a32034" stroke="#777" />
        <text x="12" y="19" textAnchor="middle" fontSize="19" fontWeight="700" fontFamily="Liberation Sans, sans-serif" fill="#fff">T</text>
      </svg>
    </TaskItem>
    <TaskItem>
      <svg width="24" height="22" viewBox="0 0 24 22">
        <path d="M8 1h8l8 13h-8z" fill="#f7c62f" />
        <path d="M8 1L0 14l4 7 8-13z" fill="#1da462" />
        <path d="M4 21h16l4-7H8z" fill="#4688f4" />
      </svg>
    </TaskItem>
    <TaskItem $run>
      <svg width="24" height="24" viewBox="0 0 24 24">
        <path d="M12 1a11 11 0 0 1 9.500 5.500H12a5.500 5.500 0 0 0-5 3L3.300 5A11 11 0 0 1 12 1z" fill="#db4437" />
        <path d="M21.500 6.500A11 11 0 0 1 12 23l4.700-8a5.500 5.500 0 0 0 .2-8.500z" fill="#fbc02d" />
        <path d="M12 23A11 11 0 0 1 3.300 5L7.500 14.500a5.500 5.500 0 0 0 5.500 3z" fill="#0f9d58" />
        <circle cx="12" cy="12" r="5.500" fill="#fff" />
        <circle cx="12" cy="12" r="4.200" fill="#4688f4" />
      </svg>
    </TaskItem>
    <TaskItem>
      <svg width="24" height="26" viewBox="0 0 24 26">
        <rect x="8" y="1" width="12" height="9" fill="#2040c0" stroke="#ddd" />
        <rect x="12" y="10" width="12" height="3" fill="#ccc" />
        <rect x="2" y="12" width="12" height="9" fill="#2040c0" stroke="#ddd" />
        <rect x="0" y="21" width="14" height="4" fill="#ccc" />
        <path d="M14 4l-5 9h4l-3 8 8-11h-4l3-6z" fill="#ffe030" stroke="#333" strokeWidth=".4" />
      </svg>
    </TaskItem>
    <TaskItem>
      <svg width="24" height="22" viewBox="0 0 24 22">
        <path d="M0 8l12-8 12 8v14H0z" fill="#fff" />
        <path d="M0 8l12 8 12-8" fill="none" stroke="#111" strokeWidth="1.400" />
        <path d="M0 22l12-8" stroke="#111" />
      </svg>
    </TaskItem>
    <TaskItem $run>
      <svg width="22" height="24" viewBox="0 0 22 24">
        <path d="M1 12C1 5 6 1 12 1c6 0 9.500 4.500 9.500 10v3H7.500c.5 4 7 5 13 2v5c-6 3-19.500 3-19.500-9zm6.500-2h7c0-4-6.500-4-7 0z" fill="#1278d4" />
      </svg>
    </TaskItem>
    <TaskItem $run $active><I2Logo size={24} /></TaskItem>
  </>
)

const App = () => (
  <Screen>
    <GlobalStyle />
    <TitleBar>
      <I2Logo />
      <TitleText>MoTeC i2 Standard 1.0.21.0031  [Engine]</TitleText>
      <WindowButtons>
        <WindowButton>
          <svg width="11" height="11" viewBox="0 0 11 11"><path d="M0 5.500h10" stroke="#111" /></svg>
        </WindowButton>
        <WindowButton>
          <svg width="11" height="11" viewBox="0 0 11 11" fill="none" stroke="#111"><rect x=".5" y="2.500" width="8" height="8" /><path d="M2.500 2.500v-2h8v8h-2" /></svg>
        </WindowButton>
        <WindowButton>
          <svg width="11" height="11" viewBox="0 0 11 11" stroke="#111"><path d="M.5.500l10 10M10.500.500l-10 10" /></svg>
        </WindowButton>
      </WindowButtons>
    </TitleBar>

    <MenuBar>
      {MENUS.map(m => <MenuItem key={m}>{m}</MenuItem>)}
      <MenuSpacer />
      <LogoBox><LogoInner>MoTeC</LogoInner></LogoBox>
    </MenuBar>

    <ToolBar>
      <ToolButton><I.open /></ToolButton>
      <ToolButton><I.del /></ToolButton>
      <ToolButton><I.save /></ToolButton>
      <ToolSep $l={2} $r={4} />
      <ToolButton><I.down /></ToolButton>
      <ToolSep $l={7} $r={1} />
      <ToolButton><I.edit /></ToolButton>
      <ToolButton><I.film /></ToolButton>
      <ToolButton><I.calc /></ToolButton>
      <ToolButton><I.check /></ToolButton>
      <ToolButton><I.info /></ToolButton>
      <ToolSep $l={6} $r={1} />
      <ToolButton><I.layers /></ToolButton>
      <ToolSep $l={2} $r={5} />
      <ToolButton><I.left /></ToolButton>
      <ToolButton><I.right /></ToolButton>
      <ToolSep $l={2} $r={5} />
      <ToolButton><I.play /></ToolButton>
      <Combo>1x <ChevronDown size={13} strokeWidth={1.2} /></Combo>
      <ToolSep $l={6} $r={0} />
      <ToolButton><I.props /></ToolButton>
      <ToolButton><I.disabled /></ToolButton>
      <ToolSep $l={3} $r={4} />
      <ToolButton><Lens inner="box" /></ToolButton>
      <ToolSep $l={4} $r={3} />
      <ToolButton><Lens inner="plus" arrows="h" /></ToolButton>
      <ToolButton><Lens inner="minus" arrows="h" /></ToolButton>
      <ToolButton><Lens inner="yellow" arrows="h" /></ToolButton>
      <ToolButton><Lens inner="red" arrows="h" /></ToolButton>
      <ToolSep $l={3} $r={3} />
      <ToolButton><Lens inner="plus" arrows="v" /></ToolButton>
      <ToolButton><Lens inner="minus" arrows="v" /></ToolButton>
      <ToolButton><Lens inner="yellow" arrows="v" /></ToolButton>
      <ToolSep $l={4} $r={5} />
      <ToolButton><Ruler /></ToolButton>
      <ToolButton><Ruler link /></ToolButton>
    </ToolBar>

    <Workspace>
      <Rail>
        <RailTab $h={59} $active>
          <svg width="14" height="12" viewBox="0 0 14 12">
            <rect x=".5" y=".5" width="13" height="11" fill="#fff" stroke="#111" />
            <path d="M2 3h10M2 5h10M2 7h10M2 9h10" stroke="#2030c0" />
          </svg>
          <RailLabel>Data</RailLabel>
        </RailTab>
        <RailTab $h={70}>
          <svg width="15" height="11" viewBox="0 0 15 11" fontFamily="Liberation Sans, sans-serif">
            <text x="0" y="8" fontSize="7" fontWeight="700">0101</text>
            <path d="M0 10h15" stroke="#111" />
          </svg>
          <RailLabel>Channels</RailLabel>
        </RailTab>
      </Rail>

      <Main>
        <Strip>
          <SessionLine>
            <MBadge>M</MBadge>
            [12:22.000] Data, 5:39:00 AM, 3/26/2018, , ,  [Gen II to Gen I conversion.ld]
          </SessionLine>
          <TimeLine>
            <TimeChip>Data</TimeChip>
            <TimeFill>Data</TimeFill>
            <CursorMark />
            <CursorRange />
          </TimeLine>
        </Strip>
        <Band />
        <TabRow>
          {TABS.map(t => <Tab key={t.label} $w={t.w} $active={t.active} $noSep={t.noSep}>{t.label}</Tab>)}
          <TabArrows>
            <svg width="6" height="11" viewBox="0 0 6 11" fill="none" stroke="#333"><path d="M5.500 .5l-5 5 5 5z" /></svg>
            <svg width="6" height="11" viewBox="0 0 6 11" fill="none" stroke="#333"><path d="M.5 .5l5 5-5 5z" /></svg>
          </TabArrows>
        </TabRow>

        <Body>
          <Center>
            <ChartFrame>
              <Chart />
              <Legends />
            </ChartFrame>
            <GaugeGrid>
              <DialPanel title="Engine RPM" sub={5} labels={['-1', '-1', '-1', '-0', '0', '0', '1', '1', '1']} />
              <VBarPanel title="Throttle Pos" scaleW={34} labels={['100.0', '3.0', '0.0']} fill={3} />
              <DialPanel title="Manifold Pres" sub={4} labels={['-1', '-1', '-0', '0', '1', '1']} />
              <VBarPanel title="Fuel Pres" scaleW={8} ml={4} pr={0} align="center" labels={['1', 'N/A', '0']} />
              <VBarPanel title="Fuel Inj Duty" scaleW={8} ml={4} pr={0} align="center" labels={['1', 'N/A', '0']} />
              <HBarPanel title="Lambda 1" height={31} value={1 / 3} target={[28, 60]} labels={['0.800', '0.900', '1.100']} />
              <DigitalPanel title="Lambda 1" value="0.900" />
              <VBarPanel title="Ign Advance" scaleW={32} labels={['-40.0', '19.7', '0.0']} />
              <HBarPanel title="Lambda 2" height={32} value={0} target={[152, 18]} labels={['0', 'N/A', '1']} />
              <DigitalPanel title="Lambda 2" value="N/A" />
            </GaugeGrid>
          </Center>

          <Side>
            <SideTools>
              <SideToolBtn><SortIcon /></SideToolBtn>
              <SideToolBtn><SortIcon digits /></SideToolBtn>
              <SideToolBtn $active>
                <svg width="13" height="13" viewBox="0 0 13 13"><rect x=".5" y=".5" width="12" height="12" fill="#fff" stroke="#777" /><path d="M2 3h1M4 3h7M2 5.500h1M4 5.500h7M2 8h1M4 8h7M2 10.500h1M4 10.500h7" stroke="#222" /></svg>
              </SideToolBtn>
            </SideTools>
            <SideMain>
              <Channels />
              <ScrollTrack>
                <ChevronUp size={13} strokeWidth={2.2} color="#555" />
                <ScrollThumb />
                <ChevronDown size={13} strokeWidth={2.2} color="#555" />
              </ScrollTrack>
            </SideMain>
          </Side>
        </Body>
      </Main>
    </Workspace>

    <StatusBar>
      <StatusCell $w={412} />
      <StatusCell $w={195} />
      <StatusCell $w={492} $pad={7}>
        <StatusRed />
        <StatusBold>Time  9:31.880 [s]</StatusBold>
        <StatusBold $ml={30}>Distance  0.00 []</StatusBold>
      </StatusCell>
      <StatusCell $w={93} $pad={4}>Data</StatusCell>
      <StatusCell $last />
    </StatusBar>

    <Taskbar>
      <StartButton>
        <svg width="16" height="16" viewBox="0 0 16 16" fill="#fff">
          <path d="M0 2.300l6.600-.9v6.300H0zM7.400 1.300L16 0v7.700H7.400zM0 8.400h6.600v6.300L0 13.800zM7.400 8.400H16V16l-8.600-1.200z" />
        </svg>
      </StartButton>
      <SearchBox>
        <svg width="22" height="22" viewBox="0 0 22 22"><circle cx="11" cy="11" r="9" fill="#fff" stroke="#111" strokeWidth="3" /></svg>
        <SearchText>Type here to search</SearchText>
      </SearchBox>
      <MicCell><Mic size={18} strokeWidth={1.1} /></MicCell>
      <TaskIcons />
      <Tray>
        <TrayItem $w={30}>
          <svg width="18" height="18" viewBox="0 0 18 18" fill="none" stroke="#fff">
            <circle cx="12" cy="5" r="2.500" /><circle cx="6" cy="8" r="2.500" />
            <path d="M1.500 16c0-6 9-6 9 0M10 9c4-2 6.500 0 6.500 3.500" />
          </svg>
        </TrayItem>
        <TrayItem $w={20} $ml={11}><ChevronUp size={17} strokeWidth={1.4} /></TrayItem>
        <TrayItem $w={26}>
          <svg width="16" height="10" viewBox="0 0 16 10" fill="none" stroke="#fff"><rect x=".5" y=".5" width="13" height="9" /><rect x="2" y="2" width="8" height="6" fill="#fff" stroke="none" /><path d="M14.500 3v4" /></svg>
        </TrayItem>
        <TrayItem $w={24}><Wifi size={16} strokeWidth={1.3} /></TrayItem>
        <TrayItem $w={22} $ml={1}><VolumeX size={16} strokeWidth={1.3} /></TrayItem>
        <Clock>6:06 AM<br />3/26/2018</Clock>
        <NotifyWrap>
          <svg width="18" height="16" viewBox="0 0 18 16" style={{ marginBottom: 3 }}><path d="M1 1h16v11H8l-3 3v-3H1z" fill="#fff" /><path d="M4 4h10M4 7h10" stroke="#333" /></svg>
          <NotifyBadge>2</NotifyBadge>
        </NotifyWrap>
        <ShowDesktop />
      </Tray>
    </Taskbar>
  </Screen>
)

export default App
